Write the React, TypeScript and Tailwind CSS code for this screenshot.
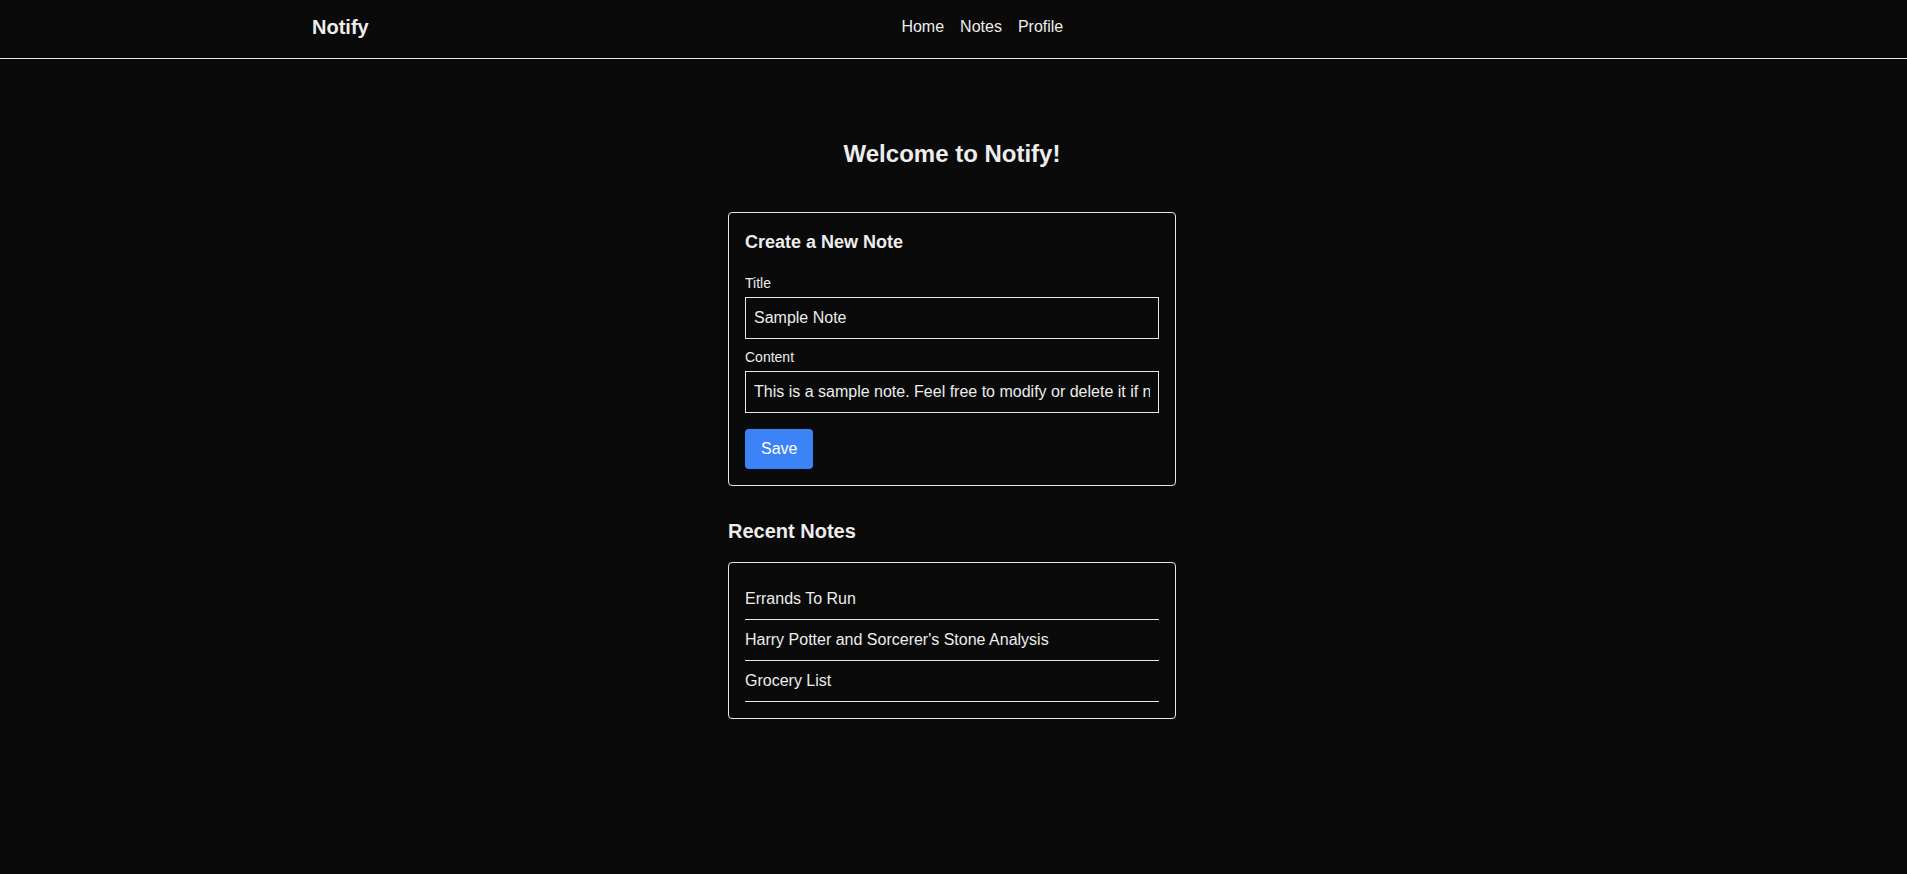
import React from "react";

export default function App() {
  const notes = ["Errands To Run", "Harry Potter and Sorcerer's Stone Analysis", "Grocery List"];
  return (
    <div
      className="min-h-screen bg-[#0a0a0a] text-[#ededed]"
      style={{ fontFamily: '"Liberation Sans", Arial, Helvetica, sans-serif' }}
    >
      <header className="h-[59px] border-b border-[#e5e7eb] pr-[3px]">
        <div className="mx-auto flex h-full max-w-[1280px] items-center justify-between pb-[4px]">
          <div className="text-xl font-bold leading-7">Notify</div>
          <nav className="ml-1 flex gap-4 text-base leading-6">
            <a href="#">Home</a>
            <a href="#">Notes</a>
            <a href="#">Profile</a>
          </nav>
          <div className="w-0" />
        </div>
      </header>

      <main className="pr-[3px] pt-[79px] pb-10">
        <h1 className="mb-[42px] text-center text-2xl font-bold leading-8">Welcome to Notify!</h1>

        <div className="mx-auto w-[448px]">
          <div className="rounded border border-[#e5e7eb] p-4">
            <h2 className="mb-[18px] text-lg font-bold leading-[26px]">Create a New Note</h2>
            <div className="mb-2">
              <label className="mb-1 block text-sm leading-5">Title</label>
              <input
                className="block w-full border border-[#e5e7eb] bg-transparent px-2 py-2 text-base leading-6 text-[#ededed] outline-none"
                defaultValue="Sample Note"
              />
            </div>
            <div className="mb-4">
              <label className="mb-1 block text-sm leading-5">Content</label>
              <input
                className="block w-full border border-[#e5e7eb] bg-transparent px-2 py-2 text-base leading-6 text-[#ededed] outline-none"
                defaultValue="This is a sample note. Feel free to modify or delete it if needed."
              />
            </div>
            <button className="rounded bg-[#3b82f6] px-4 py-2 text-base leading-6 text-white">Save</button>
          </div>

          <h2 className="mt-[31px] mb-[17px] text-xl font-bold leading-7">Recent Notes</h2>

          <div className="rounded border border-[#e5e7eb] p-4">
            <ul>
              {notes.map((n) => (
                <li key={n} className="border-b border-[#e5e7eb] py-2 text-base leading-6">
                  {n}
                </li>
              ))}
            </ul>
          </div>
        </div>
      </main>
    </div>
  );
}
